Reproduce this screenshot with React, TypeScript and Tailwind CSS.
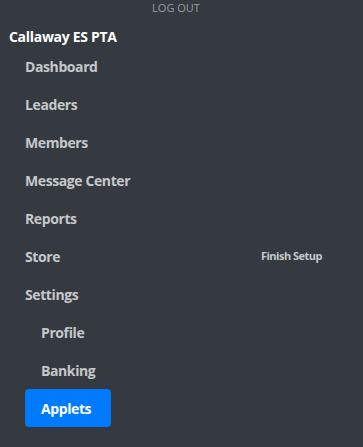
import React from "react";

const font = { fontFamily: '"Open Sans", "Noto Sans", sans-serif' };

export default function App() {
  const items = ["Dashboard", "Leaders", "Members", "Message Center", "Reports"];
  return (
    <div className="w-[363px] h-[447px] bg-[#343a40] overflow-hidden" style={font}>
      <div className="h-[15px] flex items-center justify-center pr-[11px] text-[11px] leading-none text-[#9a9da0]">
        LOG OUT
      </div>
      <div className="h-[42px] flex items-center pl-[9px] pt-[1px] text-[14px] font-bold text-white tracking-[-0.3px]">
        Callaway ES PTA
      </div>
      <ul className="-mt-[10px] pl-[25px] pr-[25px] text-[14px] font-bold text-[#c6c8ca] tracking-[-0.4px]">
        {items.map((t) => (
          <li key={t} className="h-[38px] flex items-center">{t}</li>
        ))}
        <li className="h-[38px] flex items-center justify-between">
          <span>Store</span>
          <span className="text-[11px] font-bold pr-[16px] tracking-[-0.5px] text-[#c6c8ca]">Finish Setup</span>
        </li>
        <li className="h-[38px] flex items-center">Settings</li>
        <li className="h-[38px] flex items-center pl-[16px]">Profile</li>
        <li className="h-[38px] flex items-center pl-[16px]">Banking</li>
        <li className="h-[38px] flex items-center">
          <span className="h-[38px] w-[86px] flex items-center pl-[16px] rounded-[4px] bg-[#007bff] text-white">Applets</span>
        </li>
      </ul>
    </div>
  );
}
